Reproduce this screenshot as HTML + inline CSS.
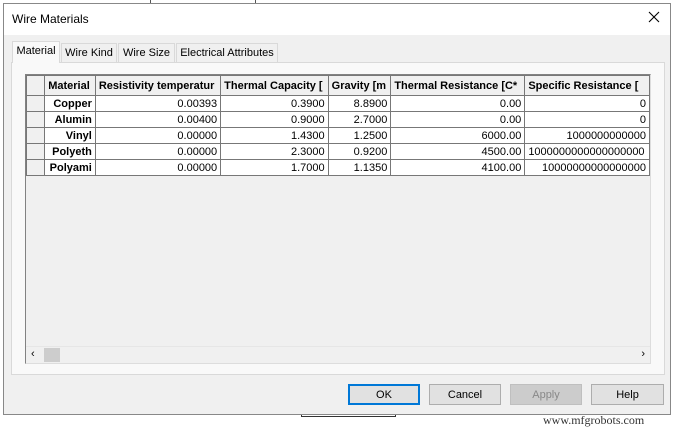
<!DOCTYPE html>
<html><head><style>
*{margin:0;padding:0;box-sizing:border-box}
body{width:673px;height:430px;background:#fff;position:relative;overflow:hidden;font-family:"Liberation Sans",Arial,sans-serif;font-size:11px;color:#000}
.win{position:absolute;left:3px;top:3px;width:668px;height:412px;border:1px solid #888;background:#f0f0f0}
.title{position:absolute;left:0;top:0;width:100%;height:31px;background:#fff;font-size:12px;padding:8px 0 0 8px}
.x{position:absolute;right:10px;top:7px}
.tab{position:absolute;top:39px;height:20px;border:1px solid #d9d9d9;border-bottom:none;background:#f0f0f0;font-size:11px;padding-top:3px;text-align:center}
.panel{position:absolute;left:7px;top:58px;width:654px;height:313px;border:1px solid #d9d9d9;background:#f9f9f9}
.grid{position:absolute;left:21px;top:70px;width:626px;height:290px;border:1px solid #828282;border-right-color:#ddd;border-bottom-color:#ddd;background:#f0f0f0;overflow:hidden}
table{border-collapse:collapse;position:absolute;left:0;top:0;table-layout:fixed}
td{border:1px solid #777;height:16px;padding:0 3px;white-space:nowrap;overflow:hidden;background:#fff;text-align:right;font-size:11px}
tr.h td{height:20px;font-weight:bold;text-align:left;background:#f0f0f0}
td.rh{background:#f0f0f0}
td.m{font-weight:bold;background:#fff}
.sb{position:absolute;left:0;bottom:0;width:100%;height:17px;background:#f0f0f0;border-top:1px solid #e6e6e6}
.btn{position:absolute;top:380px;height:21px;border:1px solid #adadad;background:#e1e1e1;text-align:center;padding-top:4px;font-size:11px}
</style></head><body>
<div style="position:absolute;left:150px;top:0;width:1px;height:3px;background:#555"></div>
<div style="position:absolute;left:255px;top:0;width:1px;height:3px;background:#555"></div>
<div style="position:absolute;left:301px;top:414px;width:95px;height:3px;border:1px solid #333;border-top:none"></div>
<div class="win">
<div class="title">Wire Materials<svg class="x" width="12" height="12" viewBox="0 0 12 12"><path d="M1 1L11 11M11 1L1 11" stroke="#000" stroke-width="1.1"/></svg></div>
<div class="tab" style="left:8px;top:37px;height:22px;width:48px;background:#f9f9f9;z-index:2">Material</div>
<div class="tab" style="left:57px;width:56px">Wire Kind</div>
<div class="tab" style="left:114px;width:57px">Wire Size</div>
<div class="tab" style="left:172px;width:102px">Electrical Attributes</div>
<div class="panel"></div>
<div class="grid">
<table>
<colgroup><col style="width:21px"><col style="width:51px"><col style="width:126px"><col style="width:108px"><col style="width:63px"><col style="width:135px"><col style="width:125px"></colgroup>
<tr class="h"><td></td><td>Material</td><td>Resistivity temperatur</td><td>Thermal Capacity [</td><td>Gravity [m</td><td>Thermal Resistance [C*</td><td>Specific Resistance [</td></tr>
<tr><td class="rh"></td><td class="m">Copper</td><td>0.00393</td><td>0.3900</td><td>8.8900</td><td>0.00</td><td>0</td></tr>
<tr><td class="rh"></td><td class="m">Alumin</td><td>0.00400</td><td>0.9000</td><td>2.7000</td><td>0.00</td><td>0</td></tr>
<tr><td class="rh"></td><td class="m">Vinyl</td><td>0.00000</td><td>1.4300</td><td>1.2500</td><td>6000.00</td><td>1000000000000</td></tr>
<tr><td class="rh"></td><td class="m">Polyeth</td><td>0.00000</td><td>2.3000</td><td>0.9200</td><td>4500.00</td><td style="text-align:left">1000000000000000000</td></tr>
<tr><td class="rh"></td><td class="m">Polyami</td><td>0.00000</td><td>1.7000</td><td>1.1350</td><td>4100.00</td><td>10000000000000000</td></tr>
</table>
<div class="sb"><span style="position:absolute;left:5px;top:1px;font-size:11px">‹</span><div style="position:absolute;left:18px;top:1px;width:16px;height:14px;background:#cdcdcd"></div><span style="position:absolute;right:5px;top:1px;font-size:11px">›</span></div>
</div>
<div class="btn" style="left:344px;width:72px;border:2px solid #0078d7;padding-top:3px">OK</div>
<div class="btn" style="left:425px;width:72px">Cancel</div>
<div class="btn" style="left:506px;width:72px;background:#ccc;border-color:#bfbfbf;color:#888">Apply</div>
<div class="btn" style="left:587px;width:73px">Help</div>
</div>
<div style="position:absolute;left:543px;top:413px;font-family:'Liberation Serif',serif;font-size:12px;color:#333">www.mfgrobots.com</div>
</body></html>
